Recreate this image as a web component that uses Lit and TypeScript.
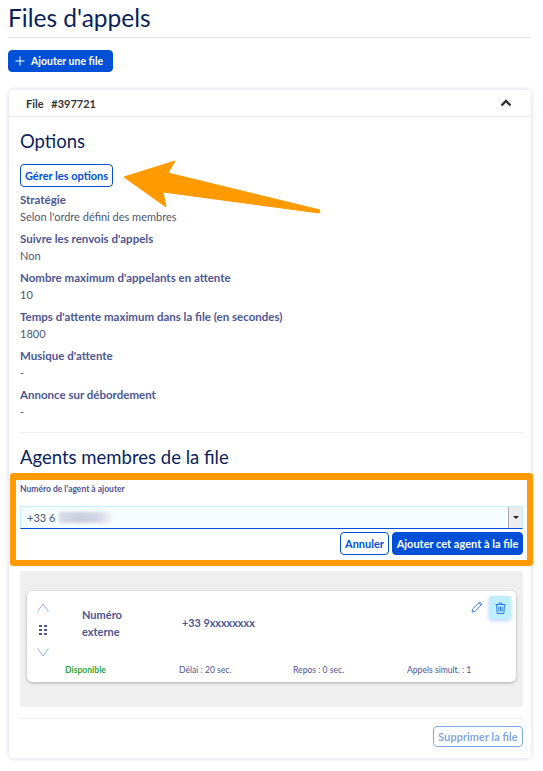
import { LitElement, html, css } from "lit";
import { customElement } from "lit/decorators.js";

const options = [
  ["Stratégie", "Selon l'ordre défini des membres"],
  ["Suivre les renvois d'appels", "Non"],
  ["Nombre maximum d'appelants en attente", "10"],
  ["Temps d'attente maximum dans la file (en secondes)", "1800"],
  ["Musique d'attente", "-"],
  ["Annonce sur débordement", "-"],
];

@customElement("app-root")
export class AppRoot extends LitElement {
  static styles = css`
    :host {
      display: block;
      position: relative;
      height: 771px;
      overflow: hidden;
      background: #fff;
      font-family: Lato, "Noto Sans", sans-serif;
      font-size: 11px;
      color: #4d5693;
    }
    * {
      box-sizing: border-box;
    }
    .page {
      padding: 0 12px 0 8px;
      display: flex;
      flex-direction: column;
    }
    h1 {
      margin: 0;
      height: 38px;
      border-bottom: 1px solid #e3e5ea;
      font-size: 24.500px;
      line-height: 36px;
      font-weight: 400;
      color: #0a1f5c;
    }
    button {
      font-family: inherit;
      font-weight: 700;
      font-size: 11px;
      border-radius: 4px;
      border: 1px solid #0050d7;
      padding: 0;
      background: #fff;
      color: #0050d7;
      white-space: nowrap;
    }
    button.primary {
      background: #0050d7;
      color: #fff;
    }
    .add {
      margin-top: 12px;
      width: 105px;
      height: 22px;
      display: flex;
      align-items: center;
      gap: 6px;
      padding-left: 6px;
      font-size: 10.500px;
    }
    .add svg {
      flex: none;
    }
    .card {
      margin: 18px 0 0 1px;
      height: 668px;
      border-radius: 4px;
      box-shadow: 0 0 5px rgba(80, 90, 190, 0.25);
      display: flex;
      flex-direction: column;
    }
    .card-head {
      height: 27px;
      padding: 0 19px 0 17px;
      border-bottom: 1px solid #e6e8ee;
      display: flex;
      align-items: center;
      justify-content: space-between;
      font-size: 11px;
      font-weight: 700;
      color: #333;
    }
    .card-head span span {
      margin-left: 5px;
    }
    .body {
      padding: 0 8px 0 11px;
      display: flex;
      flex-direction: column;
    }
    h2 {
      margin: 0;
      font-size: 18.500px;
      line-height: 26px;
      font-weight: 400;
      color: #0a1f5c;
    }
    .options-title {
      margin-top: 11px;
    }
    .manage {
      margin-top: 10px;
      width: 93px;
      height: 23px;
    }
    .options {
      margin-top: 4px;
      padding-bottom: 7px;
      border-bottom: 1px solid #eceef2;
    }
    .opt {
      margin-bottom: 5px;
      line-height: 17px;
    }
    .opt b {
      display: block;
      font-size: 11.500px;
      font-weight: 700;
    }
    .opt span {
      display: block;
      font-size: 11px;
      color: #4d5670;
    }
    .agents-title {
      margin-top: 11px;
    }
    .form {
      margin: 3px -10px 0 -10px;
      height: 93px;
      border: 6px solid #ff9a00;
      border-top-width: 7px;
      border-radius: 3px;
      padding: 3px 4px 0 4px;
      display: flex;
      flex-direction: column;
    }
    .form label {
      font-size: 8.500px;
      line-height: 12px;
      font-weight: 700;
    }
    .select {
      margin-top: 11px;
      height: 23px;
      background: #f5fdff;
      border: 1px solid #c6eefb;
      border-bottom: 1px solid #0050d7;
      display: flex;
      align-items: center;
      justify-content: space-between;
      padding-left: 6px;
      font-size: 11px;
      color: #4d5670;
    }
    .value {
      display: flex;
      align-items: center;
      gap: 4px;
    }
    .blur {
      width: 52px;
      height: 11px;
      background: linear-gradient(90deg, #d8dbe6, #c9cddd 40%, #d5d8e4 75%, #eef0f6);
      filter: blur(1.5px);
    }
    .drop {
      width: 14px;
      height: 100%;
      background: #ececec;
      border-left: 1px solid #aaa;
      display: flex;
      align-items: center;
      justify-content: center;
    }
    .drop i {
      border: 3px solid transparent;
      border-top: 3px solid #222;
      border-bottom: 0;
    }
    .form-actions {
      margin-top: 3px;
      display: flex;
      justify-content: flex-end;
      gap: 3px;
    }
    .form-actions button {
      height: 23px;
    }
    .cancel {
      width: 49px;
    }
    .confirm {
      width: 131px;
    }
    .panel {
      margin-top: 5px;
      height: 136px;
      background: #efefef;
      border-radius: 3px;
      padding: 20px 7px 0;
    }
    .agent {
      height: 91px;
      background: #fff;
      border-radius: 5px;
      box-shadow: 0 1px 3px rgba(0, 0, 0, 0.3);
      display: flex;
      flex-direction: column;
    }
    .agent-main {
      height: 72px;
      display: flex;
    }
    .order {
      width: 55px;
      padding: 12px 0 0 10px;
      display: flex;
      flex-direction: column;
      align-items: flex-start;
      gap: 13px;
    }
    .grip {
      margin-left: 2px;
      display: grid;
      grid-template-columns: 3px 3px;
      gap: 2px 2px;
    }
    .grip i {
      width: 3px;
      height: 2px;
      background: #4d5693;
    }
    .kind {
      width: 100px;
      padding-top: 15px;
      font-size: 11px;
      line-height: 17px;
      font-weight: 700;
    }
    .number {
      padding-top: 23px;
      font-size: 10.800px;
      line-height: 17px;
      font-weight: 700;
    }
    .tools {
      margin-left: auto;
      padding: 5px 5px 0 0;
      display: flex;
      gap: 6px;
      align-items: flex-start;
    }
    .pen {
      margin-top: 5px;
    }
    .trash {
      width: 22px;
      height: 23px;
      border-radius: 3px;
      background: #bfefff;
      box-shadow: 0 2px 4px rgba(0, 80, 215, 0.25);
      display: flex;
      align-items: center;
      justify-content: center;
    }
    .agent-foot {
      padding-left: 38px;
      display: grid;
      grid-template-columns: 114px 114px 114px 1fr;
      font-size: 8.600px;
      line-height: 14px;
    }
    .ok {
      font-weight: 700;
      color: #2aa63c;
    }
    .foot {
      margin-top: 11px;
      padding-top: 7px;
      border-top: 1px solid #eceef2;
      display: flex;
      justify-content: flex-end;
    }
    .remove {
      width: 90px;
      height: 21px;
      opacity: 0.5;
    }
    .arrow {
      position: absolute;
      left: 0;
      top: 0;
      pointer-events: none;
    }
  `;

  render() {
    return html`
      <div class="page">
        <h1>Files d'appels</h1>
        <button class="primary add">
          <svg width="10" height="10" viewBox="0 0 10 10"><path d="M5 .5v9M.5 5h9" stroke="#fff" fill="none"/></svg>
          Ajouter une file
        </button>
        <section class="card">
          <div class="card-head">
            <span>File <span>#397721</span></span>
            <svg width="12" height="8" viewBox="0 0 12 8"><path d="M1.500 6.500 6 2l4.500 4.500" stroke="#333" stroke-width="2.400" fill="none"/></svg>
          </div>
          <div class="body">
            <h2 class="options-title">Options</h2>
            <button class="manage">Gérer les options</button>
            <div class="options">
              ${options.map(
                ([label, value]) => html`<div class="opt"><b>${label}</b><span>${value}</span></div>`
              )}
            </div>
            <h2 class="agents-title">Agents membres de la file</h2>
            <div class="form">
              <label>Numéro de l'agent à ajouter</label>
              <div class="select">
                <div class="value">+33 6 <div class="blur"></div></div>
                <div class="drop"><i></i></div>
              </div>
              <div class="form-actions">
                <button class="cancel">Annuler</button>
                <button class="primary confirm">Ajouter cet agent à la file</button>
              </div>
            </div>
            <div class="panel">
              <div class="agent">
                <div class="agent-main">
                  <div class="order">
                    <svg width="12" height="9" viewBox="0 0 12 9"><path d="M.5 8.500 6 1l5.500 7.500" stroke="#8fb0f0" fill="none"/></svg>
                    <div class="grip">${[0, 1, 2, 3, 4, 5].map(() => html`<i></i>`)}</div>
                    <svg width="12" height="9" viewBox="0 0 12 9"><path d="M.5 .5 6 8l5.500-7.500" stroke="#8fb0f0" fill="none"/></svg>
                  </div>
                  <div class="kind">Numéro<br />externe</div>
                  <div class="number">+33 9xxxxxxxx</div>
                  <div class="tools">
                    <svg class="pen" width="12" height="12" viewBox="0 0 12 12"><path d="M1 11l.7-3L8.800 1l2.200 2.200L4 10.300zM7.800 2l2.200 2.200" stroke="#3f7fe0" fill="none"/></svg>
                    <div class="trash">
                      <svg width="11" height="12" viewBox="0 0 11 12"><path d="M.5 2.500h10M4 2.500V1h3v1.500M1.500 2.500l.6 9h6.800l.6-9M3.800 4.500v5M5.500 4.500v5M7.200 4.500v5" stroke="#2f7fe8" fill="none"/></svg>
                    </div>
                  </div>
                </div>
                <div class="agent-foot">
                  <span class="ok">Disponible</span>
                  <span>Délai : 20 sec.</span>
                  <span>Repos : 0 sec.</span>
                  <span>Appels simult. : 1</span>
                </div>
              </div>
            </div>
            <div class="foot"><button class="remove">Supprimer la file</button></div>
          </div>
        </section>
      </div>
      <svg class="arrow" width="543" height="771" viewBox="0 0 543 771">
        <polygon points="124,177 175,161 168,173 320,210 319,213 163,192 166,207" fill="#ff9a00" stroke="#ff9a00" stroke-linejoin="round" stroke-width="1"/>
      </svg>
    `;
  }
}
